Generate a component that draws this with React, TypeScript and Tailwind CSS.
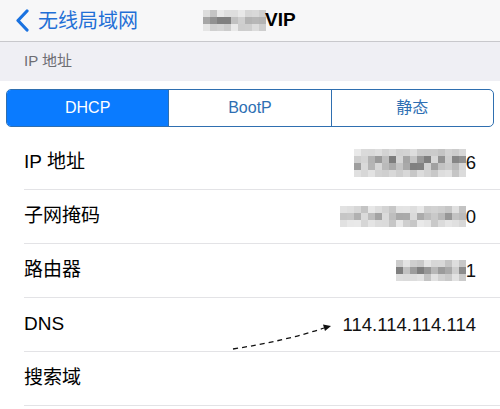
import React from 'react';

const FONT = { fontFamily: '"Liberation Sans", "Noto Sans CJK SC", sans-serif' };

// pixelated block that hides part of a value, like the censor mosaic in the shot
function Mosaic({ cols, rows, seed, cell = 7 }: { cols: number; rows: number; seed: number; cell?: number }) {
  const rand = (i: number) => {
    const x = Math.sin(seed * 97.13 + i * 12.9898) * 43758.5453;
    return x - Math.floor(x);
  };
  const cells: string[] = [];
  for (let r = 0; r < rows; r++) {
    for (let c = 0; c < cols; c++) {
      const i = r * cols + c;
      const edge = r === 0 || r === rows - 1;
      const base = edge ? 195 + rand(i) * 40 : 125 + rand(i) * 95;
      const v = Math.round(base);
      cells.push(`rgb(${v},${v},${v})`);
    }
  }
  return (
    <div
      className="grid shrink-0"
      style={{ gridTemplateColumns: `repeat(${cols}, ${cell}px)`, gridAutoRows: `${cell}px` }}
    >
      {cells.map((bg, i) => (
        <div key={i} style={{ background: bg }} />
      ))}
    </div>
  );
}

function Row({ label, children }: { label: string; children?: React.ReactNode }) {
  return (
    <div className="ml-6 h-[54px] flex items-center justify-between pr-6 border-b border-[#e3e3e6]">
      <span className="text-[19px] text-black">{label}</span>
      <div className="flex items-center text-[18.5px] text-[#111]">{children}</div>
    </div>
  );
}

export default function App() {
  return (
    <div className="relative w-[500px] h-[409px] overflow-hidden bg-white" style={FONT}>
      {/* nav bar */}
      <div className="h-[42px] bg-[#f7f7f8] border-b border-[#c8c8cc] flex items-center relative">
        <div className="flex items-center pl-[15px] gap-[9px] text-[#1f6fd6]">
          <svg width="14" height="23" viewBox="0 0 14 23">
            <path d="M12 2 L3 11.5 L12 21" fill="none" stroke="#1a72e0" strokeWidth="3.2" strokeLinecap="round" strokeLinejoin="round" />
          </svg>
          <span className="text-[20px] leading-none">无线局域网</span>
        </div>
        <div className="absolute left-[203px] top-[6px] flex items-center">
          <Mosaic cols={9} rows={3} seed={17} cell={7} />
          <span className="text-[19px] font-bold text-black -ml-[1px]">VIP</span>
        </div>
      </div>

      {/* section header */}
      <div className="h-[39px] bg-[#efeff4] flex items-center pl-6">
        <span className="text-[15px] text-[#6d6d72]">IP 地址</span>
      </div>

      {/* segmented control */}
      <div className="pt-[8px] pb-[9px] px-[6px]">
        <div className="flex h-[38px] rounded-[5px] border border-[#2f6fb0] overflow-hidden text-[16px]">
          <div className="flex-1 flex items-center justify-center bg-[#0a7bff] text-white">DHCP</div>
          <div className="flex-1 flex items-center justify-center text-[#2e6fb3] border-l border-[#2f6fb0]">BootP</div>
          <div className="flex-1 flex items-center justify-center text-[#2e6fb3] border-l border-[#2f6fb0]">静态</div>
        </div>
      </div>

      {/* rows */}
      <div>
        <Row label="IP 地址">
          <Mosaic cols={16} rows={4} seed={5} />
          <span>6</span>
        </Row>
        <Row label="子网掩码">
          <Mosaic cols={18} rows={3} seed={41} />
          <span>0</span>
        </Row>
        <Row label="路由器">
          <Mosaic cols={10} rows={3} seed={88} />
          <span>1</span>
        </Row>
        <Row label="DNS">
          <span>114.114.114.114</span>
        </Row>
        <Row label="搜索域" />
      </div>

      {/* dashed annotation arrow */}
      <svg className="absolute left-0 top-0 pointer-events-none" width="500" height="409" viewBox="0 0 500 409">
        <path d="M233 349 Q 285 341 324 328" fill="none" stroke="#111" strokeWidth="1.3" strokeDasharray="5 4" />
        <polygon points="331,326 323,324.5 325,331" fill="#111" />
      </svg>
    </div>
  );
}
